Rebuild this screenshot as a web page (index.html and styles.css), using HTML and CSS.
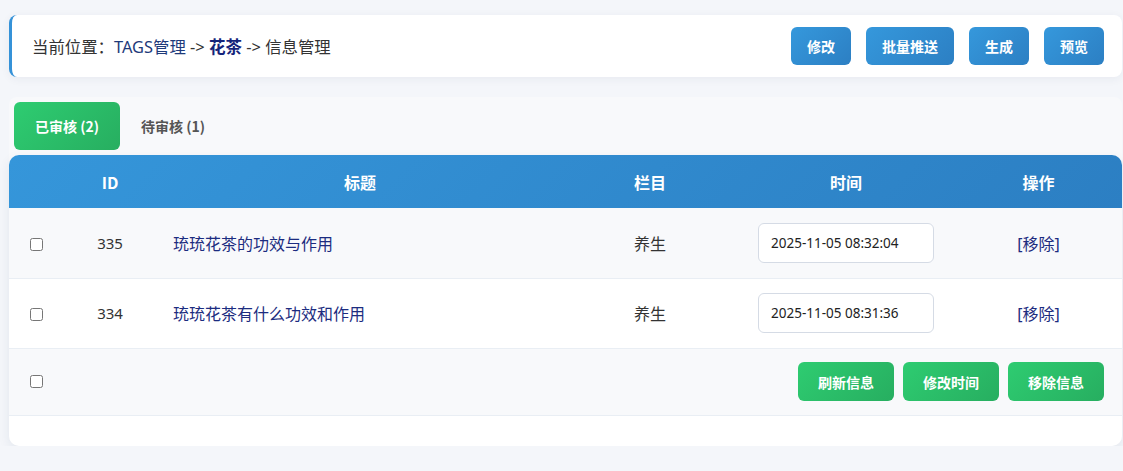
FILE: index.html
```html
<!DOCTYPE html>
<html lang="zh-CN">
<head>
<meta charset="utf-8">
<title>信息管理</title>
<link rel="stylesheet" href="styles.css">
</head>
<body>
<div class="page">
  <div class="topbar">
    <div class="crumb">当前位置：<span class="crumb-link">TAGS管理</span> -&gt; <b class="crumb-tag">花茶</b> -&gt; 信息管理</div>
    <div class="top-actions">
      <button class="btn btn-blue">修改</button>
      <button class="btn btn-blue">批量推送</button>
      <button class="btn btn-blue">生成</button>
      <button class="btn btn-blue">预览</button>
    </div>
  </div>

  <div class="panel">
    <div class="tabs">
      <div class="tab tab-active">已审核 (2)</div>
      <div class="tab">待审核 (1)</div>
    </div>
    <div class="card">
      <table class="grid">
        <colgroup>
          <col class="c-check"><col class="c-id"><col class="c-title"><col class="c-col"><col class="c-time"><col class="c-op">
        </colgroup>
        <thead>
          <tr><th></th><th>ID</th><th>标题</th><th>栏目</th><th>时间</th><th>操作</th></tr>
        </thead>
        <tbody>
          <tr class="odd">
            <td class="center"><input type="checkbox"></td>
            <td class="center num">335</td>
            <td class="title">珫珫花茶的功效与作用</td>
            <td class="center">养生</td>
            <td class="center"><input class="time" type="text" value="2025-11-05 08:32:04"></td>
            <td class="center op">[移除]</td>
          </tr>
          <tr>
            <td class="center"><input type="checkbox"></td>
            <td class="center num">334</td>
            <td class="title">珫珫花茶有什么功效和作用</td>
            <td class="center">养生</td>
            <td class="center"><input class="time" type="text" value="2025-11-05 08:31:36"></td>
            <td class="center op">[移除]</td>
          </tr>
        </tbody>
      </table>
      <div class="foot">
        <div class="foot-check"><input type="checkbox"></div>
        <div class="foot-actions">
          <button class="btn btn-green">刷新信息</button>
          <button class="btn btn-green">修改时间</button>
          <button class="btn btn-green">移除信息</button>
        </div>
      </div>
    </div>
  </div>
</div>
</body>
</html>
```
FILE: styles.css
```css
* { box-sizing: border-box; }
html, body { margin: 0; }
body {
  background: #f4f6fa;
  font-family: "Noto Sans", "Noto Sans CJK SC", sans-serif;
  color: #333;
}
.page {
  width: 1113px;
  margin-left: 9px;
  padding-top: 15px;
}
.topbar {
  height: 62px;
  background: #fff;
  border-left: 3px solid #3592d8;
  border-radius: 8px;
  box-shadow: 0 2px 10px rgba(30, 50, 90, 0.06);
  display: flex;
  align-items: center;
  justify-content: space-between;
  padding: 0 18px 0 20px;
}
.crumb { font-size: 16.4px; color: #333; }
.crumb-link { color: #1e3a7a; }
.crumb-tag { color: #14237a; font-size: 16.5px; font-weight: 700; }
.top-actions { display: flex; gap: 15px; }
.btn {
  border: 0;
  border-radius: 6px;
  color: #fff;
  font-family: "Noto Sans CJK SC", "Noto Sans", sans-serif;
  font-size: 14px;
  font-weight: 700;
  cursor: pointer;
}
.btn-blue {
  height: 38px;
  padding: 0 16px;
  background: linear-gradient(135deg, #3598dc, #2c7fc3);
}
.btn-green {
  height: 39px;
  padding: 0 20px;
  background: linear-gradient(135deg, #2ecc71, #27ae60);
}
.panel {
  margin-top: 20px;
  background: #f8f9fb;
  border-radius: 8px 8px 10px 10px;
}
.tabs {
  display: flex;
  padding: 5px;
}
.tab {
  height: 48px;
  padding: 0 21px;
  display: flex;
  align-items: center;
  font-family: "Noto Sans CJK SC", "Noto Sans", sans-serif;
  font-size: 14px;
  font-weight: 700;
  color: #555;
  border-radius: 6px;
}
.tab-active {
  color: #fff;
  background: linear-gradient(135deg, #2ecc71, #27ae60);
}
.card {
  background: #fff;
  border-radius: 10px;
  box-shadow: 0 4px 12px rgba(30, 50, 90, 0.08);
  padding-bottom: 30px;
  overflow: hidden;
}
.grid {
  width: 100%;
  border-collapse: collapse;
  table-layout: fixed;
}
.c-check { width: 54px; }
.c-id { width: 94px; }
.c-title { width: 406px; }
.c-col { width: 174px; }
.c-time { width: 218px; }
.c-op { width: 167px; }
.grid thead tr {
  background: linear-gradient(135deg, #3596da, #2c7fc3);
}
.grid th {
  height: 53px;
  color: #fff;
  font-family: "Noto Sans CJK SC", "Noto Sans", sans-serif;
  font-size: 16px;
  font-weight: 700;
  text-align: center;
  padding: 0;
}
.grid td {
  height: 70px;
  padding: 0 16px;
  font-size: 16px;
  color: #333;
  border-bottom: 1px solid #e9eef4;
}
.grid tbody tr { background: #fff; }
.grid tbody tr.odd { background: #f8f9fb; }
.center { text-align: center; }
.grid td.num { font-size: 15px; padding: 0; }
.grid td.title { color: #1c2c80; }
.grid td.op { color: #1c2c80; }
.grid input[type="checkbox"],
.foot input[type="checkbox"] {
  margin: 0;
  width: 13px;
  height: 13px;
  vertical-align: middle;
}
.grid td:first-child { padding: 0; }
.time {
  width: 176px;
  height: 40px;
  border: 1px solid #d5dbe5;
  border-radius: 6px;
  padding: 0 12px;
  font-family: "Noto Sans", sans-serif;
  font-size: 13.5px;
  color: #222;
  background: #fff;
  vertical-align: middle;
}
.foot {
  height: 67px;
  background: #f8f9fb;
  border-bottom: 1px solid #e9eef4;
  display: flex;
  align-items: center;
  justify-content: space-between;
  padding: 0 18px 0 0;
}
.foot-check {
  width: 54px;
  display: flex;
  justify-content: center;
}
.foot-actions { display: flex; gap: 9px; }
```
